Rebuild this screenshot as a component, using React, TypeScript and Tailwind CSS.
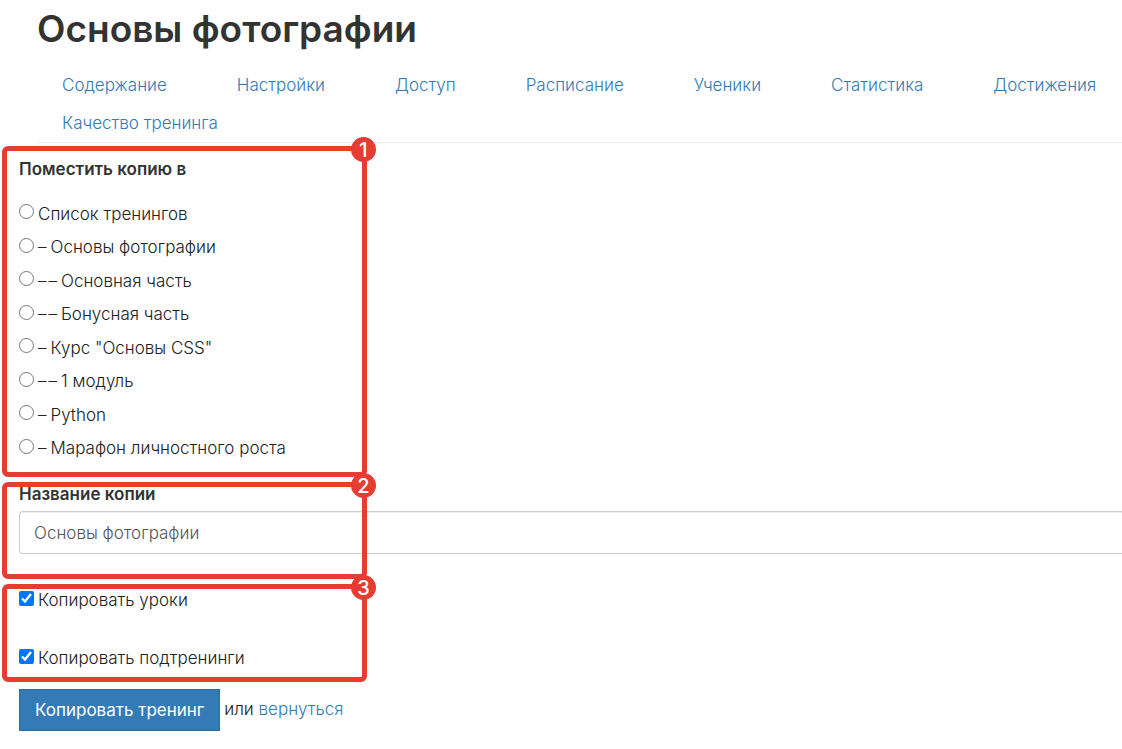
import React, { useState } from 'react';

const tabs = [
  'Содержание',
  'Настройки',
  'Доступ',
  'Расписание',
  'Ученики',
  'Статистика',
  'Достижения',
  'Качество тренинга',
];

const targets = [
  { title: 'Список тренингов', depth: 0 },
  { title: 'Основы фотографии', depth: 1 },
  { title: 'Основная часть', depth: 2 },
  { title: 'Бонусная часть', depth: 2 },
  { title: 'Курс "Основы CSS"', depth: 1 },
  { title: '1 модуль', depth: 2 },
  { title: 'Python', depth: 1 },
  { title: 'Марафон личностного роста', depth: 1 },
];

// Red frame with a step number, laid over a form section
const StepFrame: React.FC<{ step: number }> = ({ step }) => (
  <div className="pointer-events-none absolute inset-y-0 left-0.5 w-[365px] rounded-md border-5 border-[#e63c32]">
    <span className="absolute -top-3.5 -right-3.5 flex h-[25px] w-[25px] items-center justify-center rounded-full bg-[#e63c32] text-xl leading-6 font-medium text-white">
      {step}
    </span>
  </div>
);

const CheckRow: React.FC<{ label: string }> = ({ label }) => {
  const [checked, setChecked] = useState(true);

  return (
    <label className="flex items-center gap-1">
      <input
        type="checkbox"
        checked={checked}
        onChange={(e) => setChecked(e.target.checked)}
        className="mb-1 h-[15px] w-[15px] accent-[#0075ff]"
      />
      {label}
    </label>
  );
};

export default function App() {
  const [target, setTarget] = useState('');
  const [copyName, setCopyName] = useState('Основы фотографии');

  return (
    <div className="overflow-x-hidden bg-white font-['Inter',sans-serif] text-[17px] leading-6 font-light text-[#212121]">
      <header className="pl-[37px]">
        <h1 className="pt-1 text-[37px] leading-[50px] font-semibold text-[#333333]">Основы фотографии</h1>
        <nav className="mt-3 border-b border-[#eeeeee]">
          <ul className="flex flex-wrap gap-x-[70px] pr-4 pl-[25px] leading-[38px]">
            {tabs.map((tab) => (
              <li key={tab}>
                <a href="#" className="text-[#337ab7]">{tab}</a>
              </li>
            ))}
          </ul>
        </nav>
      </header>

      <form className="mt-[3px] flex flex-col gap-[5px]" onSubmit={(e) => e.preventDefault()}>
        <fieldset className="relative pt-[11px] pb-3 pl-[19px]">
          <legend className="float-left w-full font-semibold text-[#333333]">Поместить копию в</legend>
          <div className="clear-both grid min-h-[284px] auto-rows-fr pt-4">
            {targets.map(({ title, depth }) => (
              <label key={title} className="flex items-center gap-1">
                <input
                  type="radio"
                  name="target"
                  value={title}
                  checked={target === title}
                  onChange={() => setTarget(title)}
                  className="mb-1 h-[15px] w-[15px]"
                />
                {depth > 0 && (
                  <span className="flex gap-0.5">
                    {Array.from({ length: depth }, (_, i) => (
                      <span key={i}>–</span>
                    ))}
                  </span>
                )}
                {title}
              </label>
            ))}
          </div>
          <StepFrame step={1} />
        </fieldset>

        <div className="relative pb-[25px] pl-[19px]">
          <label htmlFor="copy-name" className="mb-[5px] block font-semibold text-[#333333]">Название копии</label>
          <input
            id="copy-name"
            type="text"
            value={copyName}
            onChange={(e) => setCopyName(e.target.value)}
            className="block h-[43px] w-full rounded-l border border-r-0 border-[#cccccc] px-3.5 text-[#555555] shadow-[inset_0_1px_1px_rgba(0,0,0,0.075)]"
          />
          <StepFrame step={2} />
        </div>

        <div className="relative flex flex-col gap-[34px] pt-1 pb-3 pl-[19px]">
          <CheckRow label="Копировать уроки" />
          <CheckRow label="Копировать подтренинги" />
          <StepFrame step={3} />
        </div>

        <div className="flex items-center gap-1 pt-0.5 pl-[19px]">
          <button type="submit" className="h-[42px] border border-[#2e6da4] bg-[#337ab7] px-[15px] font-normal text-white">
            Копировать тренинг
          </button>
          <span className="pb-0.5">
            или <a href="#" className="text-[#337ab7]">вернуться</a>
          </span>
        </div>
      </form>
    </div>
  );
}
